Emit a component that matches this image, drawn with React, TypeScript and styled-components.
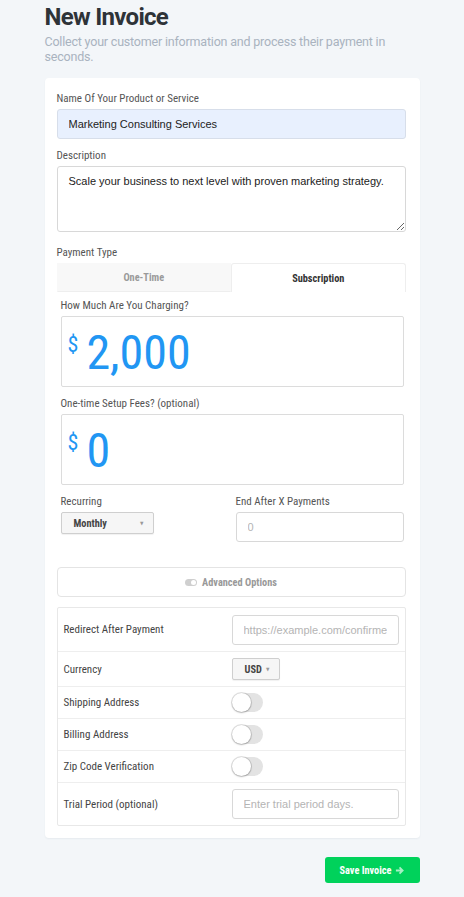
import React from "react";
import styled, { createGlobalStyle } from "styled-components";

const narrow = `"Roboto Condensed", "Liberation Sans Narrow", "DejaVu Sans Condensed", Roboto, sans-serif`;

const GlobalStyle = createGlobalStyle`
  body {
    margin: 0;
    background: #f3f6f9;
    font-family: Roboto, "Liberation Sans", sans-serif;
  }
  * { box-sizing: border-box; }
`;

const Page = styled.div`
  width: 375px;
  margin: 0 auto;
  padding: 2px 0 14px;
  display: flex;
  flex-direction: column;
`;

const Title = styled.h1`
  margin: 0;
  font-size: 24px;
  font-weight: 700;
  color: #2e3338;
  line-height: 30px;
  letter-spacing: -0.7px;
`;

const Subtitle = styled.p`
  margin: 2px 0 14px;
  font-size: 12.5px;
  line-height: 15px;
  letter-spacing: -0.2px;
  color: #a9b3bf;
`;

const Card = styled.div`
  background: #fff;
  border-radius: 4px;
  padding: 14px 14px 12px 12px;
  box-shadow: 0 1px 2px rgba(40, 60, 90, 0.06);
`;

const Label = styled.label`
  display: block;
  font-family: ${narrow};
  font-stretch: condensed;
  font-size: 11px;
  line-height: 13px;
  color: #555;
  margin-bottom: 4px;
`;

const Field = styled.div<{ $gap?: number }>`
  margin-bottom: ${(p) => p.$gap ?? 10}px;
`;

const TextInput = styled.input<{ $filled?: boolean }>`
  display: block;
  width: 100%;
  height: 30px;
  padding: 0 11px;
  border: 1px solid ${(p) => (p.$filled ? "#d7deea" : "#d8d8d8")};
  border-radius: 3px;
  background: ${(p) => (p.$filled ? "#e8f0fe" : "#fff")};
  font-family: "Liberation Sans", Arial, sans-serif;
  font-size: 11px;
  color: #222;
  outline: none;

  &::placeholder {
    color: #b4b4b4;
  }
`;

const TextArea = styled.textarea`
  display: block;
  width: 100%;
  height: 66px;
  padding: 8px 11px;
  border: 1px solid #d8d8d8;
  border-radius: 3px;
  font-family: "Liberation Sans", Arial, sans-serif;
  font-size: 11px;
  color: #222;
  resize: vertical;
  outline: none;
`;

const Tabs = styled.div`
  display: grid;
  grid-template-columns: 1fr 1fr;
  height: 29px;
`;

const Tab = styled.div<{ $active?: boolean }>`
  display: flex;
  align-items: center;
  justify-content: center;
  font-family: ${narrow};
  font-stretch: condensed;
  font-size: 10.3px;
  font-weight: 700;
  color: ${(p) => (p.$active ? "#333" : "#9a9a9a")};
  background: ${(p) => (p.$active ? "#fff" : "#f8f8f8")};
  border: 1px solid ${(p) => (p.$active ? "#eee" : "transparent")};
  border-bottom: ${(p) => (p.$active ? "none" : "1px solid #eee")};
  border-radius: ${(p) => (p.$active ? "3px 3px 0 0" : "0")};
`;

const TabPanel = styled.div`
  padding: 7px 2px 0 4px;
`;

const AmountBox = styled.div`
  height: 71px;
  border: 1px solid #dcdcdc;
  border-radius: 2px;
  display: flex;
  align-items: center;
  gap: 8px;
  padding: 0 0 0 6px;
  color: #2196f3;
`;

const Currency = styled.span`
  font-family: ${narrow};
  font-stretch: condensed;
  font-size: 22px;
  align-self: flex-start;
  margin-top: 15px;
`;

const Amount = styled.span`
  font-family: ${narrow};
  font-stretch: condensed;
  font-size: 48px;
  line-height: 1;
  margin-top: 2px;
`;

const Split = styled.div`
  display: grid;
  grid-template-columns: 175px 1fr;
  margin-bottom: 25px;
`;

const SelectBox = styled.div<{ $width: number }>`
  width: ${(p) => p.$width}px;
  height: 22px;
  display: flex;
  align-items: center;
  justify-content: space-between;
  padding: 0 9px 0 12px;
  background: #f6f6f6;
  border: 1px solid #cfcfcf;
  border-radius: 2px;
  box-shadow: 0 1px 1px rgba(0, 0, 0, 0.06);
  font-family: ${narrow};
  font-stretch: condensed;
  font-size: 10.3px;
  font-weight: 700;
  color: #444;

  &::after {
    content: "▼";
    font-size: 5px;
    color: #999;
  }
`;

const AdvancedBar = styled.div`
  height: 30px;
  border: 1px solid #e4e4e4;
  border-radius: 4px;
  display: flex;
  align-items: center;
  justify-content: center;
  gap: 5px;
  font-family: ${narrow};
  font-stretch: condensed;
  font-size: 10.3px;
  font-weight: 700;
  color: #999;
  margin-bottom: 10px;
`;

const OptionsTable = styled.div`
  border: 1px solid #e8e8e8;
  border-radius: 2px;
`;

const OptionRow = styled.div<{ $height: number }>`
  display: grid;
  grid-template-columns: 168px 1fr;
  align-items: center;
  height: ${(p) => p.$height}px;
  padding: 0 6px 0 6px;
  border-top: 1px solid #eee;

  &:first-child {
    border-top: none;
  }
`;

const RowLabel = styled.span`
  font-family: ${narrow};
  font-stretch: condensed;
  font-size: 11px;
  color: #444;
`;

const Switch = styled.span`
  position: relative;
  display: block;
  width: 31px;
  height: 19px;
  border-radius: 10px;
  background: #e3e3e3;

  &::before {
    content: "";
    position: absolute;
    left: 0;
    top: 0;
    width: 19px;
    height: 19px;
    border-radius: 50%;
    background: #fff;
    box-shadow: 0 0 0 1px rgba(0, 0, 0, 0.12), 0 1px 2px rgba(0, 0, 0, 0.2);
  }
`;

const Footer = styled.div`
  display: flex;
  justify-content: flex-end;
  margin-top: 19px;
`;

const SaveButton = styled.button`
  width: 95px;
  height: 26px;
  border: none;
  border-radius: 3px;
  background: #00d25b;
  color: #fff;
  font-family: ${narrow};
  font-stretch: condensed;
  font-size: 10.3px;
  font-weight: 700;
  display: flex;
  align-items: center;
  justify-content: center;
  gap: 4px;
  cursor: pointer;
`;

function ToggleIcon() {
  return (
    <svg width="12" height="7" viewBox="0 0 12 7">
      <rect x="0" y="0" width="12" height="7" rx="3.5" fill="#cfcfcf" />
      <circle cx="8.5" cy="3.5" r="2.5" fill="#fff" />
    </svg>
  );
}

function ArrowIcon() {
  return (
    <svg width="9" height="9" viewBox="0 0 10 10">
      <path d="M1 5h7M5 1.5L8.5 5 5 8.5" stroke="#a6f0c4" strokeWidth="2" fill="none" />
    </svg>
  );
}

export default function App() {
  return (
    <>
      <GlobalStyle />
      <Page>
        <Title>New Invoice</Title>
        <Subtitle>Collect your customer information and process their payment in seconds.</Subtitle>

        <Card>
          <Field>
            <Label>Name Of Your Product or Service</Label>
            <TextInput $filled defaultValue="Marketing Consulting Services" />
          </Field>

          <Field $gap={14}>
            <Label>Description</Label>
            <TextArea defaultValue="Scale your business to next level with proven marketing strategy." />
          </Field>

          <Label>Payment Type</Label>
          <Tabs>
            <Tab>One-Time</Tab>
            <Tab $active>Subscription</Tab>
          </Tabs>

          <TabPanel>
            <Field>
              <Label>How Much Are You Charging?</Label>
              <AmountBox>
                <Currency>$</Currency>
                <Amount>2,000</Amount>
              </AmountBox>
            </Field>

            <Field>
              <Label>One-time Setup Fees? (optional)</Label>
              <AmountBox>
                <Currency>$</Currency>
                <Amount>0</Amount>
              </AmountBox>
            </Field>

            <Split>
              <div>
                <Label>Recurring</Label>
                <SelectBox $width={93}>Monthly</SelectBox>
              </div>
              <div>
                <Label>End After X Payments</Label>
                <TextInput placeholder="0" />
              </div>
            </Split>
          </TabPanel>

          <AdvancedBar>
            <ToggleIcon />
            Advanced Options
          </AdvancedBar>

          <OptionsTable>
            <OptionRow $height={43}>
              <RowLabel>Redirect After Payment</RowLabel>
              <TextInput placeholder="https://example.com/confirmed" />
            </OptionRow>
            <OptionRow $height={35}>
              <RowLabel>Currency</RowLabel>
              <SelectBox $width={48}>USD</SelectBox>
            </OptionRow>
            <OptionRow $height={32}>
              <RowLabel>Shipping Address</RowLabel>
              <Switch />
            </OptionRow>
            <OptionRow $height={32}>
              <RowLabel>Billing Address</RowLabel>
              <Switch />
            </OptionRow>
            <OptionRow $height={32}>
              <RowLabel>Zip Code Verification</RowLabel>
              <Switch />
            </OptionRow>
            <OptionRow $height={43}>
              <RowLabel>Trial Period (optional)</RowLabel>
              <TextInput placeholder="Enter trial period days." />
            </OptionRow>
          </OptionsTable>
        </Card>

        <Footer>
          <SaveButton>
            Save Invoice <ArrowIcon />
          </SaveButton>
        </Footer>
      </Page>
    </>
  );
}
